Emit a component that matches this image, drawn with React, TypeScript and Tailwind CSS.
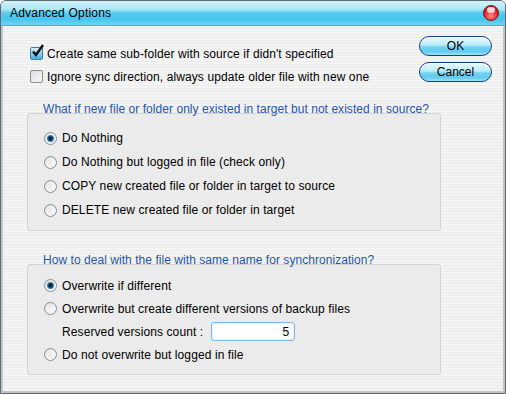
const font = { fontFamily: '"Liberation Sans", Arial, sans-serif' };

function Checkbox({ checked, label }: { checked?: boolean; label: string }) {
  return (
    <div className="flex h-[23px] items-center">
      <div className="relative h-[13px] w-[13px]">
        {checked ? (
          <div className="h-[13px] w-[13px] rounded-[2px] border border-[#3c7fb1] bg-[linear-gradient(180deg,#d9f1fd,#7cc8f0_60%,#4aa9e2)]" />
        ) : (
          <div className="h-[13px] w-[13px] rounded-[2px] border border-[#8f8f8f] bg-[linear-gradient(135deg,#dcdcdc,#f8f8f8)]" />
        )}
        {checked && (
          <svg className="absolute left-[1px] top-[-3px]" width="14" height="14" viewBox="0 0 14 14">
            <path d="M2 7.5 L5 11 L12 1" fill="none" stroke="#111" strokeWidth="2.4" strokeLinejoin="miter" />
          </svg>
        )}
      </div>
      <span className="ml-[4px] text-[12px] tracking-[0.1px] text-black">{label}</span>
    </div>
  );
}

function Radio({ checked, label }: { checked?: boolean; label: string }) {
  return (
    <div className="flex h-full items-center">
      <div className="flex h-[13px] w-[13px] items-center justify-center rounded-full border border-[#8d8d8d] bg-[linear-gradient(135deg,#e2e2e2,#ffffff)]">
        {checked && (
          <div className="flex h-[7px] w-[7px] items-center justify-center rounded-full bg-[radial-gradient(circle,#0b2a45_30%,#3c8fd0_70%,#9fd3f3)]" />
        )}
      </div>
      <span className="ml-[5px] text-[12px] tracking-[0.1px] text-black">{label}</span>
    </div>
  );
}

function GlossButton({ children }: { children: string }) {
  return (
    <div className="flex h-[20px] w-[73px] items-center justify-center rounded-full border border-[#193f86] bg-[linear-gradient(180deg,#e9f9fe_0%,#b9ecfa_45%,#74d4f2_55%,#5fcbef_80%,#9fe2f7_100%)] text-[12px] text-black shadow-[inset_0_1px_0_#ffffff]">
      {children}
    </div>
  );
}

export default function App() {
  return (
    <div
      className="flex h-[394px] w-[506px] flex-col overflow-hidden rounded-t-[6px] border border-[#5e6a72] bg-[#f0f0f0]"
      style={font}
    >
      {/* Title bar */}
      <div className="flex h-[25px] shrink-0 items-center justify-between border-b border-[#5aa9c6] bg-[linear-gradient(180deg,#d2f3fb_0%,#a9e7f7_35%,#55cdf2_50%,#45c5ee_75%,#6fd5f3_100%)] pl-[9px] pr-[6px]">
        <span className="text-[12px] tracking-[0.2px] text-black">Advanced Options</span>
        <div className="relative h-[16px] w-[16px] rounded-full border border-[#7a1010] bg-[radial-gradient(circle_at_50%_70%,#ff8a8a,#e42020_55%,#9a0d0d)]">
          <div className="absolute left-[3px] top-[1px] h-[6px] w-[8px] rounded-full bg-[linear-gradient(180deg,#ffffff,#ffd0d0)] opacity-90" />
        </div>
      </div>

      {/* Body */}
      <div className="flex flex-1 flex-col border-x-2 border-b-2 border-[#c4c4c4] bg-[repeating-linear-gradient(180deg,#f4f4f4_0px,#f4f4f4_2px,#ececec_2px,#ececec_3px)] pl-[24px] pr-[11px] pt-[10px]">
        <div className="flex justify-between">
          <div className="mt-[6px] pl-[3px]">
            <Checkbox checked label="Create same sub-folder with source if didn't specified" />
            <Checkbox label="Ignore sync direction, always update older file with new one" />
          </div>
          <div className="flex flex-col gap-[6px]">
            <GlossButton>OK</GlossButton>
            <GlossButton>Cancel</GlossButton>
          </div>
        </div>

        {/* Group 1 */}
        <div className="mt-[14px] w-[414px]">
          <div className="relative z-10 h-[14px] pl-[16px] text-[12px] leading-[14px] tracking-[0.05px] text-[#1f56b0]">
            What if new file or folder only existed in target but not existed in source?
          </div>
          <div className="-mt-[3px] flex flex-col rounded-[3px] border border-[#d3d3d3] bg-[#ebebeb] pb-[8px] pl-[16px] pt-[12px]">
            <div className="h-[24px]"><Radio checked label="Do Nothing" /></div>
            <div className="h-[24px]"><Radio label="Do Nothing but logged in file (check only)" /></div>
            <div className="h-[24px]"><Radio label="COPY new created file or folder in target to source" /></div>
            <div className="h-[24px]"><Radio label="DELETE new created file or folder in target" /></div>
          </div>
        </div>

        {/* Group 2 */}
        <div className="mt-[22px] w-[414px]">
          <div className="relative z-10 h-[14px] pl-[16px] text-[12px] leading-[14px] tracking-[0.05px] text-[#1f56b0]">
            How to deal with the file with same name for synchronization?
          </div>
          <div className="-mt-[3px] flex flex-col rounded-[3px] border border-[#d3d3d3] bg-[#ebebeb] pb-[8px] pl-[16px] pt-[9px]">
            <div className="h-[23px]"><Radio checked label="Overwrite if different" /></div>
            <div className="h-[23px]"><Radio label="Overwrite but create different versions of backup files" /></div>
            <div className="flex h-[23px] items-center pl-[18px]">
              <span className="text-[12px] tracking-[0.1px] text-black">Reserved versions count :</span>
              <div className="ml-[8px] flex h-[19px] w-[84px] items-center justify-end rounded-[3px] border border-[#7eb6ea] bg-white pr-[5px] text-[12px] text-black shadow-[inset_0_0_2px_#a8d2f5]">
                5
              </div>
            </div>
            <div className="h-[23px]"><Radio label="Do not overwrite but logged in file" /></div>
          </div>
        </div>
      </div>
    </div>
  );
}
